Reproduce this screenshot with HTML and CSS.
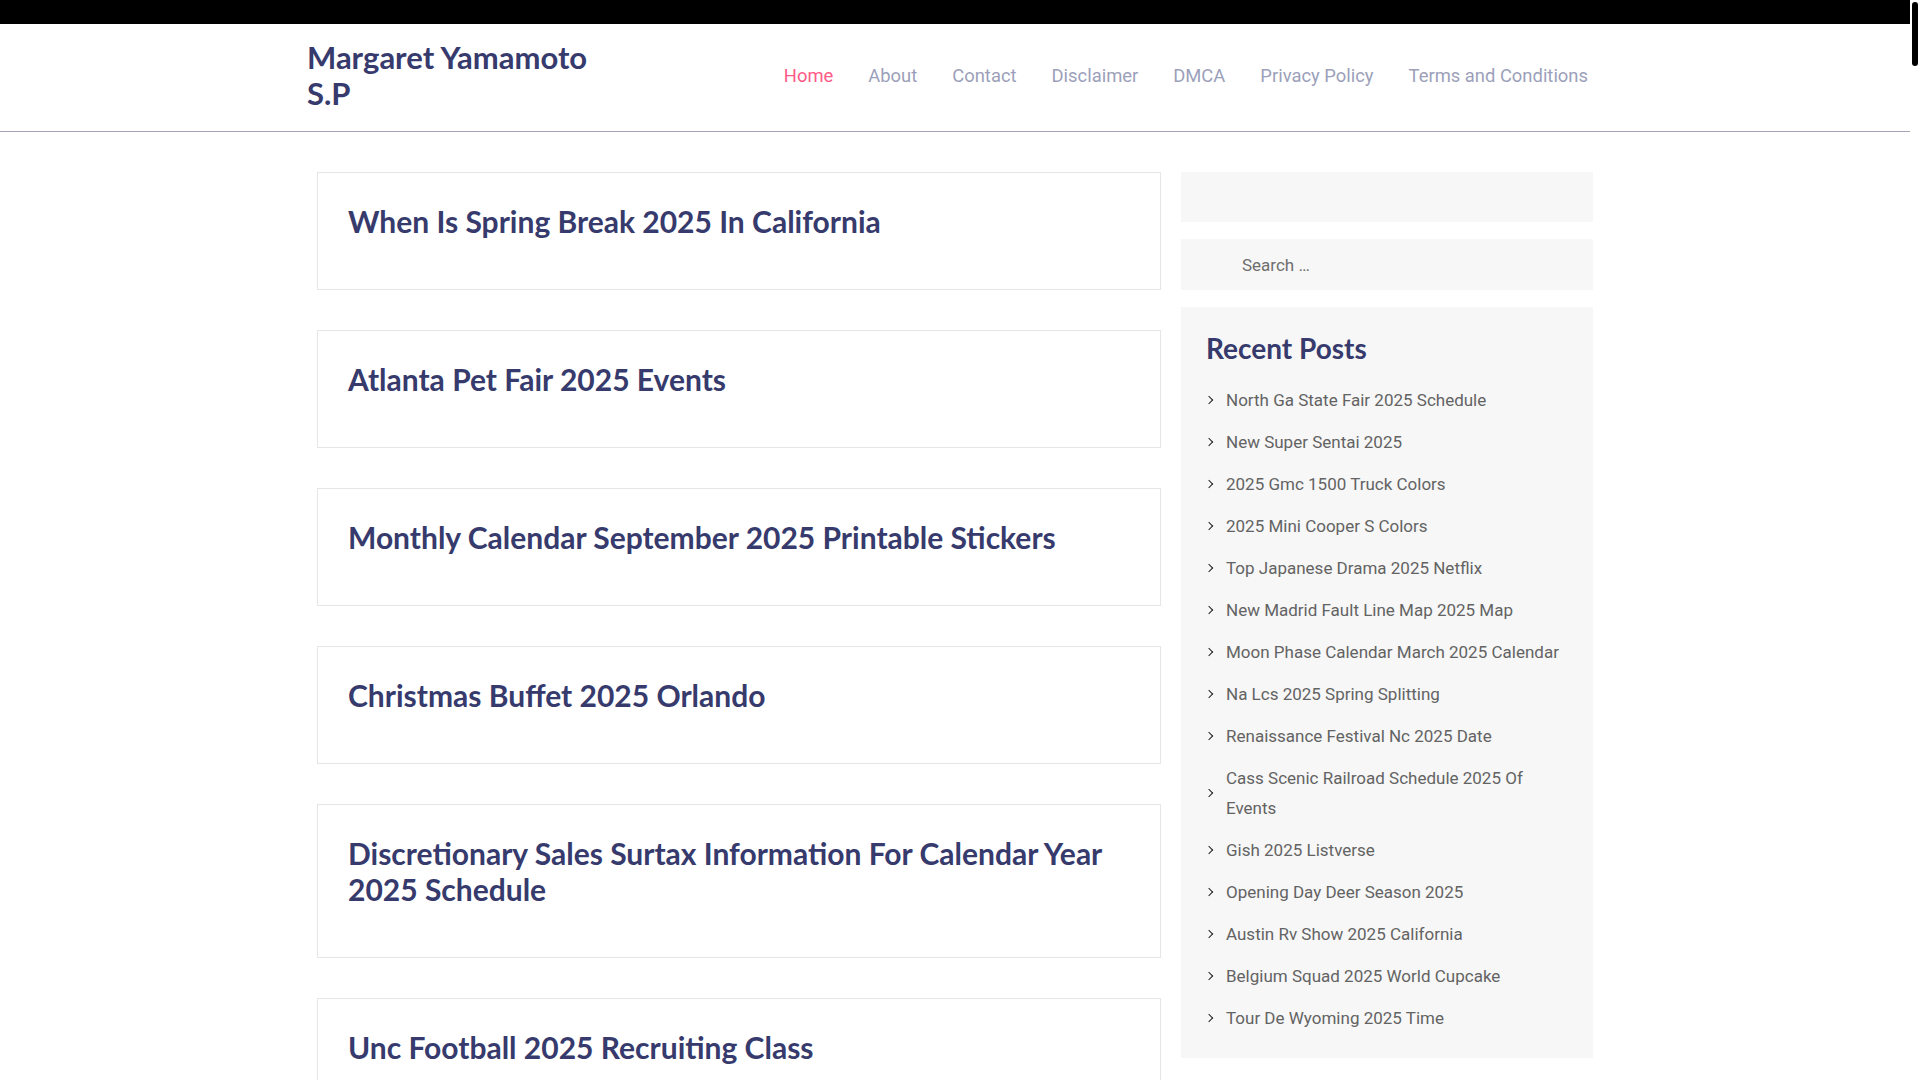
FILE: index.html
```html
<!DOCTYPE html>
<html lang="en">
<head>
<meta charset="utf-8">
<title>Margaret Yamamoto S.P</title>
<link rel="stylesheet" href="styles.css">
</head>
<body>
<div class="topbar"></div>
<header class="site-header">
  <div class="header-inner">
    <div class="site-title">Margaret Yamamoto S.P</div>
    <nav class="main-nav">
      <a class="active" href="#">Home</a>
      <a href="#">About</a>
      <a href="#">Contact</a>
      <a href="#">Disclaimer</a>
      <a href="#">DMCA</a>
      <a href="#">Privacy Policy</a>
      <a href="#">Terms and Conditions</a>
    </nav>
  </div>
</header>
<div class="content">
  <main class="posts">
    <article class="card"><h2>When Is Spring Break 2025 In California</h2></article>
    <article class="card"><h2>Atlanta Pet Fair 2025 Events</h2></article>
    <article class="card"><h2>Monthly Calendar September 2025 Printable Stickers</h2></article>
    <article class="card"><h2>Christmas Buffet 2025 Orlando</h2></article>
    <article class="card"><h2>Discretionary Sales Surtax Information For Calendar Year 2025 Schedule</h2></article>
    <article class="card"><h2>Unc Football 2025 Recruiting Class</h2></article>
  </main>
  <aside class="sidebar">
    <div class="widget empty"></div>
    <div class="widget search"><span class="placeholder">Search …</span></div>
    <div class="widget recent">
      <h3>Recent Posts</h3>
      <ul>
        <li>North Ga State Fair 2025 Schedule</li>
        <li>New Super Sentai 2025</li>
        <li>2025 Gmc 1500 Truck Colors</li>
        <li>2025 Mini Cooper S Colors</li>
        <li>Top Japanese Drama 2025 Netflix</li>
        <li>New Madrid Fault Line Map 2025 Map</li>
        <li>Moon Phase Calendar March 2025 Calendar</li>
        <li>Na Lcs 2025 Spring Splitting</li>
        <li>Renaissance Festival Nc 2025 Date</li>
        <li>Cass Scenic Railroad Schedule 2025 Of Events</li>
        <li>Gish 2025 Listverse</li>
        <li>Opening Day Deer Season 2025</li>
        <li>Austin Rv Show 2025 California</li>
        <li>Belgium Squad 2025 World Cupcake</li>
        <li>Tour De Wyoming 2025 Time</li>
      </ul>
    </div>
  </aside>
</div>
<div class="fake-scrollbar"><div class="thumb"></div></div>
</body>
</html>
```
FILE: styles.css
```css
html { overflow: hidden; }

body {
  margin: 0 10px 0 0;
  background: #fff;
  font-family: "Roboto", "Liberation Sans", sans-serif;
}

.fake-scrollbar {
  position: fixed;
  top: 0;
  right: 0;
  width: 10px;
  height: 100vh;
  background: #fff;
}

.fake-scrollbar .thumb {
  margin: 2px 2px 0 2px;
  height: 64px;
  background: #000;
  border-radius: 3px;
}

.topbar {
  height: 24px;
  background: #000;
}

.site-header {
  border-bottom: 1px solid #a3a3b9;
}

.header-inner {
  width: 1296px;
  margin: 0 auto;
  display: flex;
  align-items: center;
  justify-content: space-between;
  padding: 15px 0 20px;
  box-sizing: border-box;
}

.site-title {
  width: 310px;
  font-family: "Lato", sans-serif;
  font-weight: 700;
  font-size: 31px;
  line-height: 36px;
  color: #363a6c;
}

.main-nav {
  display: flex;
  gap: 35px;
  padding-right: 15px;
  margin-top: 1px;
}

.main-nav a {
  font-size: 18.4px;
  color: #9c9fba;
  text-decoration: none;
  line-height: 24px;
}

.main-nav a.active {
  color: #ff5a87;
}

.content {
  width: 1276px;
  margin: 40px auto 0;
  display: flex;
  gap: 20px;
  align-items: flex-start;
}

.posts {
  width: 844px;
  display: flex;
  flex-direction: column;
  gap: 40px;
}

.card {
  border: 1px solid #e6e6e6;
  padding: 30px 30px 50px;
}

.card h2 {
  margin: 0;
  font-family: "Lato", sans-serif;
  font-weight: 700;
  font-size: 30px;
  line-height: 36px;
  color: #363a6c;
}

.sidebar {
  width: 412px;
  display: flex;
  flex-direction: column;
  gap: 17px;
}

.widget {
  background: #f7f7f7;
}

.widget.empty { height: 50px; }

.widget.search {
  height: 51px;
  display: flex;
  align-items: center;
  padding-left: 61px;
}

.placeholder {
  font-size: 17px;
  color: #6e6e6e;
}

.widget.recent {
  padding: 24px 25px 19px;
}

.recent h3 {
  margin: 0 0 14px;
  font-family: "Lato", sans-serif;
  font-weight: 700;
  font-size: 28px;
  line-height: 34px;
  color: #363a6c;
}

.recent ul {
  list-style: none;
  margin: 0;
  padding: 0;
}

.recent li {
  position: relative;
  display: flex;
  align-items: center;
  padding: 6px 0 6px 20px;
  font-size: 17px;
  line-height: 30px;
  color: #636363;
}

.recent li::before {
  content: "";
  position: absolute;
  left: 0;
  top: 50%;
  width: 5px;
  height: 5px;
  border-top: 1.6px solid #222;
  border-right: 1.6px solid #222;
  transform: translateY(-50%) rotate(45deg);
}
```
